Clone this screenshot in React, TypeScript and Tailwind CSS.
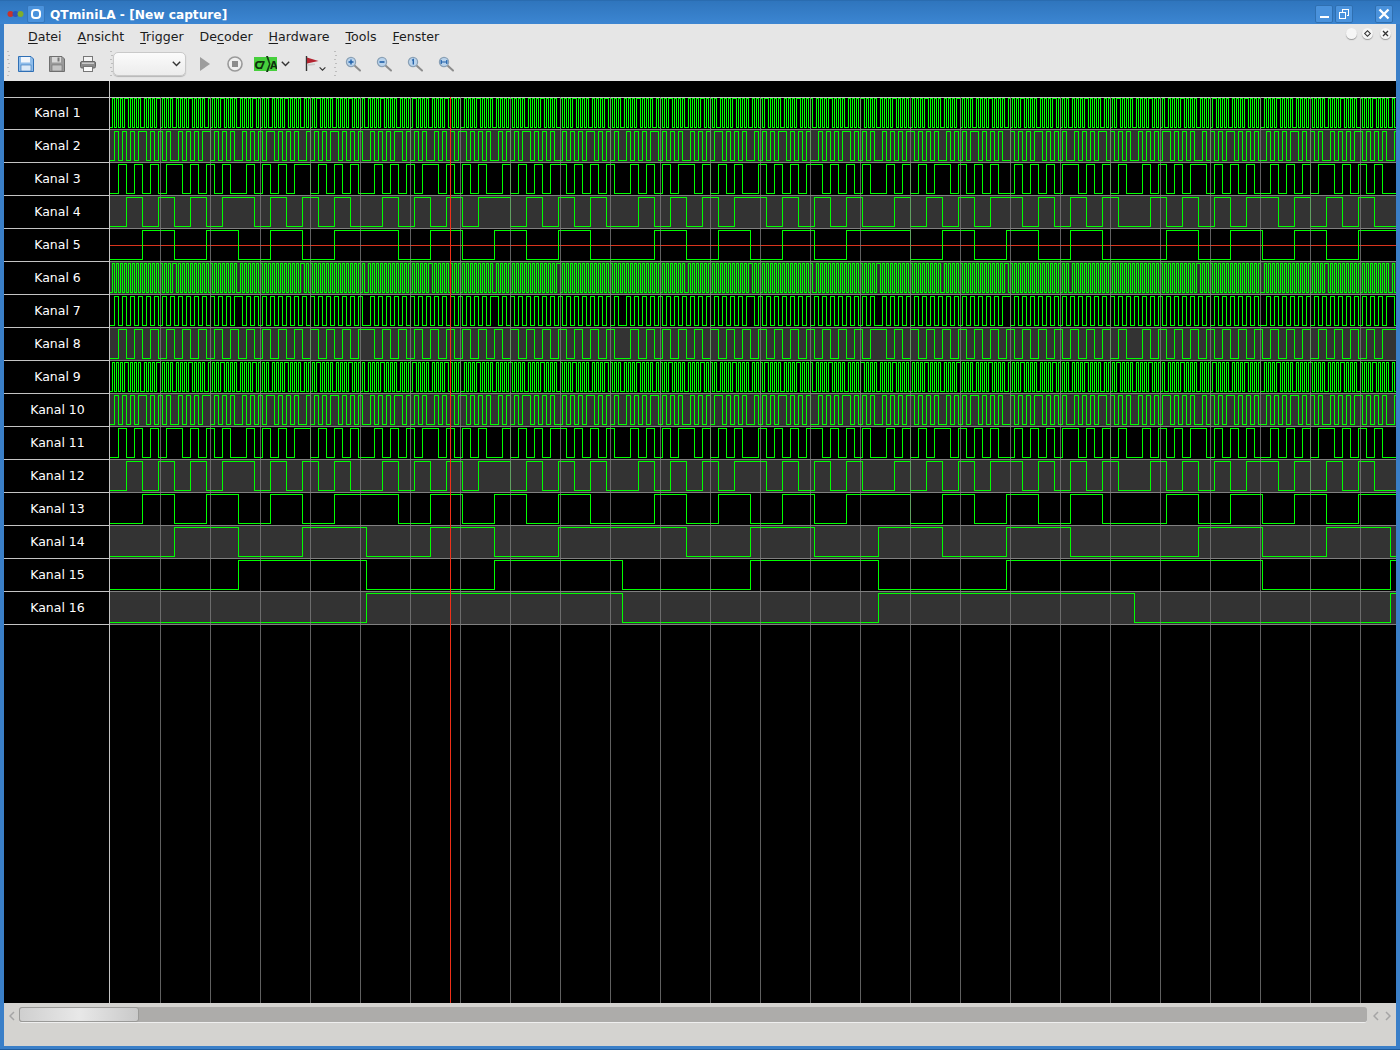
import React from "react";

// channel bits: each trace is the xor of a few bits of a running counter
const CHANNELS: { name: string; bits: number[] }[] = [
  { name: "Kanal 1", bits: [1, 4] },
  { name: "Kanal 2", bits: [2, 5] },
  { name: "Kanal 3", bits: [3, 6] },
  { name: "Kanal 4", bits: [4, 7] },
  { name: "Kanal 5", bits: [5, 8] },
  { name: "Kanal 6", bits: [1, 6, 9] },
  { name: "Kanal 7", bits: [2, 7, 10] },
  { name: "Kanal 8", bits: [3, 8, 11] },
  { name: "Kanal 9", bits: [1, 4] },
  { name: "Kanal 10", bits: [2, 5] },
  { name: "Kanal 11", bits: [3, 6] },
  { name: "Kanal 12", bits: [4, 7] },
  { name: "Kanal 13", bits: [5, 8] },
  { name: "Kanal 14", bits: [6, 9] },
  { name: "Kanal 15", bits: [7, 10] },
  { name: "Kanal 16", bits: [8, 11] },
];

const TRACE_WIDTH = 1286;

function tracePath(bits: number[]) {
  const level = (t: number) => (bits.reduce((v, b) => v ^ (t >> b), 0) & 1 ? 1.5 : 30.5);
  let d = `M0 ${level(0)}`;
  for (let t = 1; t < TRACE_WIDTH; t++) {
    if (level(t) !== level(t - 1)) d += `H${t + 0.5}V${level(t)}`;
  }
  return d + `H${TRACE_WIDTH}`;
}

function Trace({ bits, marker }: { bits: number[]; marker?: boolean }) {
  return (
    <svg width={TRACE_WIDTH} height={32} className="block shrink-0" shapeRendering="crispEdges">
      {marker && <path d={`M0 16.5H${TRACE_WIDTH}`} stroke="#d8341c" fill="none" />}
      <path d={tracePath(bits)} stroke="#00ff00" fill="none" />
    </svg>
  );
}

function Grid() {
  const lines: number[] = [];
  for (let x = 160; x < 1396; x += 50) lines.push(x);
  return (
    <svg className="absolute left-0 top-[16px] pointer-events-none" width={1392} height={906} shapeRendering="crispEdges">
      {lines.map((x) => (
        <path key={x} d={`M${x - 3.5} 0V906`} stroke="#808080" strokeOpacity={0.75} />
      ))}
      <path d="M446.5 0V906" stroke="#f03018" />
    </svg>
  );
}

function Handle() {
  return (
    <div className="w-[3px] h-[28px] mx-[3px] shrink-0 flex flex-col justify-between py-[1px]">
      {[0, 1, 2, 3, 4, 5, 6].map((i) => (
        <span key={i} className={`w-[2px] h-[1px] bg-[#bdbdbd] ${i % 2 ? "ml-[1px]" : ""}`} />
      ))}
    </div>
  );
}

function Floppy({ blue }: { blue?: boolean }) {
  const edge = blue ? "#2f6fb5" : "#6f6f6f";
  const fill = blue ? "#8fbdea" : "#9a9a9a";
  return (
    <svg width="16" height="16" viewBox="0 0 16 16">
      <path d="M0.5 0.5H13L15.5 3V15.5H0.5Z" fill={fill} stroke={edge} />
      <rect x="3" y="1" width="9" height="5.5" fill={blue ? "#f2f6fb" : "#d8d8d8"} />
      <rect x="3" y="9" width="10" height="6" fill={blue ? "#dbe9f7" : "#c4c4c4"} stroke={edge} strokeWidth="0.6" />
      {!blue && <rect x="8.5" y="1.5" width="2" height="4" fill="#777" />}
    </svg>
  );
}

function Printer() {
  return (
    <svg width="16" height="16" viewBox="0 0 16 16">
      <rect x="3.5" y="0.5" width="9" height="5" fill="#f4f4f4" stroke="#777" />
      <rect x="0.5" y="5.5" width="15" height="6.5" rx="1.5" fill="#8b8b8b" stroke="#666" />
      <rect x="2" y="6.5" width="12" height="1.5" fill="#c9c9c9" />
      <rect x="3.5" y="10.5" width="9" height="5" fill="#fbfbfb" stroke="#777" />
    </svg>
  );
}

function Magnifier({ kind }: { kind: "in" | "out" | "one" | "fit" }) {
  return (
    <svg width="16" height="16" viewBox="0 0 16 16">
      <path d="M9.5 9.5L15 14.5" stroke="#8d8d8d" strokeWidth="2" strokeLinecap="round" />
      <circle cx="6" cy="6" r="4.6" fill="#b9d3ec" stroke="#8aa0b5" strokeWidth="1.2" />
      {kind === "in" && <path d="M3.5 6H8.5M6 3.5V8.5" stroke="#1f5fa8" strokeWidth="1.4" />}
      {kind === "out" && <path d="M3.5 6H8.5" stroke="#1f5fa8" strokeWidth="1.6" />}
      {kind === "one" && <path d="M5 4.2L6.3 3.5V8.5" stroke="#1f5fa8" strokeWidth="1.3" fill="none" />}
      {kind === "fit" && <path d="M3.2 4V8M8.8 4V8M3.2 6H8.8" stroke="#1f5fa8" strokeWidth="1.2" fill="none" />}
    </svg>
  );
}

function Chevron({ size = 9 }: { size?: number }) {
  return (
    <svg width={size} height={6} viewBox="0 0 9 6">
      <path d="M0.8 0.8L4.5 4.6L8.2 0.8" stroke="#333" strokeWidth="1.4" fill="none" />
    </svg>
  );
}

function ProtocolIcon() {
  return (
    <svg width="23" height="16" viewBox="0 0 23 16">
      <rect x="0" y="1" width="23" height="14" fill="#46cf3c" />
      <path d="M12 0L15 8L12 16H14L16.5 8L14 0Z" fill="#143c14" />
      <text x="0.5" y="12.5" fontSize="11" fontWeight="700" fontFamily="'DejaVu Sans Condensed','DejaVu Sans',sans-serif" fill="#0e2f0e" textLength="11">C7</text>
      <text x="16" y="12.5" fontSize="11" fontWeight="700" fontFamily="'DejaVu Sans Condensed','DejaVu Sans',sans-serif" fill="#0e2f0e" textLength="7">A</text>
    </svg>
  );
}

function Flag() {
  return (
    <svg width="15" height="15" viewBox="0 0 15 15">
      <path d="M1.5 0V15" stroke="#333" strokeWidth="1.4" />
      <path d="M2 1.5L13.5 5L2 7.5Z" fill="#b32430" />
      <path d="M2 8L10 7.5V9L2 10Z" fill="#c9c9c9" />
    </svg>
  );
}

function Mnemonic({ before = "", letter, after }: { before?: string; letter: string; after: string }) {
  return (
    <span>
      {before}
      <span className="underline underline-offset-2">{letter}</span>
      {after}
    </span>
  );
}

function TitleButton({ children }: { children: React.ReactNode }) {
  return (
    <div className="w-[18px] h-[18px] rounded-[2px] bg-[#4a92dc] border border-[#2f6fb0] flex items-center justify-center">
      {children}
    </div>
  );
}

function RoundButton({ children }: { children?: React.ReactNode }) {
  return (
    <div className="w-[11px] h-[11px] rounded-full bg-[#f6f6f6] shadow-[0_1px_1px_#9a9a9a] flex items-center justify-center">
      {children}
    </div>
  );
}

export default function App() {
  return (
    <div className="w-[1400px] h-[1050px] flex flex-col overflow-hidden bg-[#3a7fc8] border-b border-b-[#1f5c9e] font-['DejaVu_Sans',sans-serif]">
      {/* title bar */}
      <div className="h-[24px] shrink-0 flex items-center bg-gradient-to-b from-[#2f75bd] to-[#3c86d2] pl-[7px] pr-[7px] pt-[2px] border-t border-t-[#2a6cb0]">
        <svg width="17" height="8" viewBox="0 0 17 8" className="shrink-0">
          <circle cx="3.5" cy="4" r="3" fill="#c8332b" />
          <circle cx="8.5" cy="4" r="3" fill="#2c55b8" />
          <circle cx="13.5" cy="4" r="3" fill="#7fae2a" />
        </svg>
        <div className="ml-[3px] w-[18px] h-[18px] rounded-[2px] bg-[#4a92dc] border border-[#3476bb] flex items-center justify-center">
          <div className="w-[10px] h-[10px] rounded-[4px] border-[2.5px] border-white" />
        </div>
        <span className="ml-[5px] mt-[3px] text-[12.2px] font-bold text-white">QTminiLA - [New capture]</span>
        <div className="ml-auto flex items-center">
          <TitleButton>
            <span className="w-[9px] h-[2px] bg-white mt-[7px]" />
          </TitleButton>
          <div className="ml-[2px]">
            <TitleButton>
              <svg width="10" height="10" viewBox="0 0 10 10" shapeRendering="crispEdges">
                <path d="M3.5 2.5V0.5H9.5V6.5H7.5M0.5 3.5H6.5V9.5H0.5Z" stroke="white" fill="none" />
              </svg>
            </TitleButton>
          </div>
          <div className="ml-[22px]">
            <TitleButton>
              <svg width="12" height="12" viewBox="0 0 12 12">
                <path d="M1.5 1.5L10.5 10.5M10.5 1.5L1.5 10.5" stroke="white" strokeWidth="2.4" />
              </svg>
            </TitleButton>
          </div>
        </div>
      </div>

      {/* window body */}
      <div className="flex-1 min-h-0 ml-[4px] mr-[4px] mb-[3px] flex flex-col bg-[#d4d3d0]">
        {/* menu bar */}
        <div className="h-[25px] shrink-0 flex items-center pl-[24px] pr-[5px] pt-[1px] gap-[16px] bg-[#e6e6e6] text-[12.6px] text-[#1c1c1c]">
          <Mnemonic letter="D" after="atei" />
          <Mnemonic letter="A" after="nsicht" />
          <Mnemonic letter="T" after="rigger" />
          <Mnemonic before="De" letter="c" after="oder" />
          <Mnemonic letter="H" after="ardware" />
          <Mnemonic letter="T" after="ools" />
          <Mnemonic letter="F" after="enster" />
          <div className="ml-auto flex items-center -mt-[8px]">
            <RoundButton />
            <div className="ml-[5px]">
              <RoundButton>
                <span className="w-[5px] h-[5px] rotate-45 border border-[#333]" />
              </RoundButton>
            </div>
            <div className="ml-[7px]">
              <RoundButton>
                <svg width="7" height="7" viewBox="0 0 7 7">
                  <path d="M1 1L6 6M6 1L1 6" stroke="#333" strokeWidth="1.3" />
                </svg>
              </RoundButton>
            </div>
          </div>
        </div>

        {/* tool bar */}
        <div className="h-[32px] shrink-0 flex items-center pb-[3px] bg-[#e6e6e6]">
          <Handle />
          <div className="ml-[5px] w-[16px] flex"><Floppy blue /></div>
          <div className="ml-[15px] w-[16px] flex"><Floppy /></div>
          <div className="ml-[15px] w-[16px] flex"><Printer /></div>
          <div className="ml-[11px]"><Handle /></div>
          <div className="-ml-[3px] w-[73px] h-[24px] rounded-[5px] bg-gradient-to-b from-[#fbfbfb] to-[#ececec] border border-[#c9c9c9] shadow-[0_1px_1px_#b5b5b5] flex items-center justify-end pr-[4px]">
            <Chevron />
          </div>
          <svg width="10" height="14" viewBox="0 0 10 14" className="ml-[14px] shrink-0">
            <path d="M0 0L10 7L0 14Z" fill="#9d9d9d" />
          </svg>
          <svg width="16" height="16" viewBox="0 0 16 16" className="ml-[17px] shrink-0">
            <circle cx="8" cy="8" r="7" fill="#efefef" stroke="#9a9a9a" strokeWidth="1.6" />
            <rect x="5" y="5" width="6" height="6" fill="#8c8c8c" />
          </svg>
          <div className="ml-[11px] flex"><ProtocolIcon /></div>
          <div className="ml-[4px] flex"><Chevron /></div>
          <div className="ml-[15px] flex"><Flag /></div>
          <div className="ml-[-1px] mt-[11px] flex"><Chevron size={7} /></div>
          <div className="ml-[5px]"><Handle /></div>
          <div className="ml-[5px] flex"><Magnifier kind="in" /></div>
          <div className="ml-[15px] flex"><Magnifier kind="out" /></div>
          <div className="ml-[15px] flex"><Magnifier kind="one" /></div>
          <div className="ml-[15px] flex"><Magnifier kind="fit" /></div>
        </div>

        {/* capture view */}
        <div className="relative h-[922px] shrink-0 bg-black overflow-hidden">
          <div className="h-[16px] ml-[105px] border-l border-l-[#c4c4c4]" />
          <div className="border-t border-t-[#c4c4c4]">
            {CHANNELS.map((ch, i) => (
              <div
                key={ch.name}
                className={`flex border-b border-b-[#808080] ${i === 0 ? "h-[32px]" : "h-[33px]"}`}
              >
                <div className="w-[105px] shrink-0 flex items-center justify-center pl-[2px] text-[12.5px] text-white border-b border-b-[#c4c4c4] -mb-px">
                  {ch.name}
                </div>
                <div className="w-px shrink-0 bg-[#c4c4c4] -mb-px" />
                <div className={`flex-1 min-w-0 overflow-hidden ${i % 2 ? "bg-[#333333]" : ""}`}>
                  <div className={i === 0 ? "-mt-px" : ""}>
                    <Trace bits={ch.bits} marker={i === 4} />
                  </div>
                </div>
              </div>
            ))}
          </div>
          <div className="absolute left-[105px] top-[544px] bottom-0 w-px bg-[#c4c4c4]" />
          <Grid />
        </div>

        {/* scroll bar */}
        <div className="h-[20px] shrink-0 flex items-end pl-[5px] pr-[4px]">
          <svg width="6" height="10" viewBox="0 0 6 10" className="mb-[2px] shrink-0">
            <path d="M5 1L1 5L5 9" stroke="#a5a5a5" strokeWidth="1.5" fill="none" />
          </svg>
          <div className="ml-[4px] w-[1348px] h-[16px] rounded-[3px] bg-[#adacaa] border-b border-b-[#efefef] shrink-0">
            <div className="w-[120px] h-[15px] rounded-[3px] border border-[#9a9a98] bg-gradient-to-r from-[#cfcfcf] via-[#e8e8e8] to-[#c9c9c9]" />
          </div>
          <svg width="6" height="10" viewBox="0 0 6 10" className="ml-[6px] mb-[2px] shrink-0">
            <path d="M5 1L1 5L5 9" stroke="#a5a5a5" strokeWidth="1.5" fill="none" />
          </svg>
          <svg width="6" height="10" viewBox="0 0 6 10" className="ml-[6px] mb-[2px] shrink-0">
            <path d="M1 1L5 5L1 9" stroke="#a5a5a5" strokeWidth="1.5" fill="none" />
          </svg>
        </div>
      </div>
    </div>
  );
}
